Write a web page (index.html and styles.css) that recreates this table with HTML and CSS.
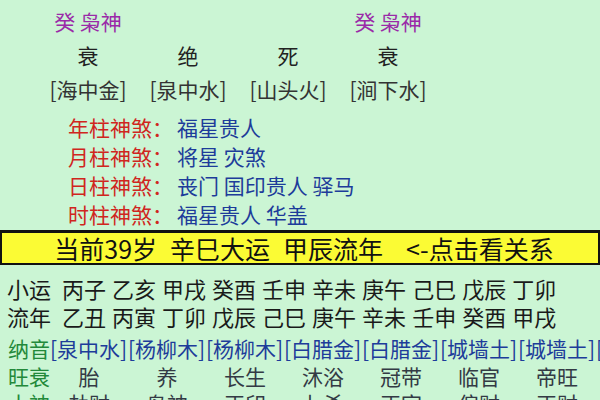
FILE: index.html
```html
<!DOCTYPE html>
<html lang="zh">
<head>
<meta charset="utf-8">
<link rel="stylesheet" href="styles.css">
</head>
<body>
<div class="page">
  <div class="pillars">
    <div class="cell god">癸 枭神</div><div class="cell"></div><div class="cell"></div><div class="cell god">癸 枭神</div>
    <div class="cell">衰</div><div class="cell">绝</div><div class="cell">死</div><div class="cell">衰</div>
    <div class="cell nayin">[海中金]</div><div class="cell nayin">[泉中水]</div><div class="cell nayin">[山头火]</div><div class="cell nayin">[涧下水]</div>
  </div>

  <div class="shensha">
    <div class="ss-row"><span class="ss-label">年柱神煞：</span><span class="ss-val">福星贵人</span></div>
    <div class="ss-row"><span class="ss-label">月柱神煞：</span><span class="ss-val">将星 灾煞</span></div>
    <div class="ss-row"><span class="ss-label">日柱神煞：</span><span class="ss-val">丧门 国印贵人 驿马</span></div>
    <div class="ss-row"><span class="ss-label">时柱神煞：</span><span class="ss-val">福星贵人 华盖</span></div>
  </div>

  <div class="bar">
    <span>当前39岁</span><span>辛巳大运</span><span>甲辰流年</span><span class="link">&lt;-点击看关系</span>
  </div>

  <div class="seq first">
    <span class="seq-label">小运</span>
    <span>丙子</span><span>乙亥</span><span>甲戌</span><span>癸酉</span><span>壬申</span><span>辛未</span><span>庚午</span><span>己巳</span><span>戊辰</span><span>丁卯</span>
  </div>
  <div class="seq">
    <span class="seq-label">流年</span>
    <span>乙丑</span><span>丙寅</span><span>丁卯</span><span>戊辰</span><span>己巳</span><span>庚午</span><span>辛未</span><span>壬申</span><span>癸酉</span><span>甲戌</span>
  </div>

  <div class="table nay">
    <span class="tlabel">纳音</span>
    <span class="tv">[泉中水]</span><span class="tv">[杨柳木]</span><span class="tv">[杨柳木]</span><span class="tv">[白腊金]</span><span class="tv">[白腊金]</span><span class="tv">[城墙土]</span><span class="tv">[城墙土]</span><span class="tv">[</span>
  </div>
  <div class="table ws">
    <span class="tlabel">旺衰</span>
    <span class="tc">胎</span><span class="tc">养</span><span class="tc">长生</span><span class="tc">沐浴</span><span class="tc">冠带</span><span class="tc">临官</span><span class="tc">帝旺</span>
  </div>
  <div class="table ts">
    <span class="tlabel">十神</span>
    <span class="tc">劫财</span><span class="tc">枭神</span><span class="tc">正印</span><span class="tc">七杀</span><span class="tc">正官</span><span class="tc">偏财</span><span class="tc">正财</span>
  </div>
</div>
</body>
</html>
```

FILE: styles.css
```css
html, body {
  margin: 0;
  padding: 0;
}
body {
  width: 600px;
  height: 400px;
  overflow: hidden;
  background: #cbf5d4;
  font-family: "Noto Sans CJK SC", "Noto Sans", sans-serif;
  color: #222;
}
.page {
  width: 600px;
}
.pillars {
  display: grid;
  grid-template-columns: repeat(4, 100px);
  grid-auto-rows: 34px;
  padding: 4px 0 0 38px;
  font-size: 21px;
  line-height: 34px;
  text-align: center;
}
.cell {
  white-space: nowrap;
}
.god {
  color: #9a2aa8;
}
.nayin {
  color: #333;
}
.shensha {
  margin-top: 7px;
  padding-left: 68px;
  font-size: 21px;
}
.ss-row {
  height: 29px;
  line-height: 29px;
  white-space: nowrap;
}
.ss-label {
  color: #d0261e;
}
.ss-val {
  color: #1d3c9a;
  margin-left: 4px;
}
.bar {
  margin-top: 1px;
  height: 30px;
  background: #fbfb34;
  border-top: 3px solid #111;
  border-bottom: 2px solid #111;
  border-left: 2px solid #111;
  border-right: 2px solid #111;
  display: flex;
  justify-content: center;
  gap: 13px;
  font-size: 25px;
  line-height: 30px;
  color: #111;
  padding-left: 8px;
}
.bar .link {
  margin-left: 10px;
}
.seq {
  display: flex;
  gap: 6px;
  padding-left: 7px;
  height: 28px;
  line-height: 28px;
  font-size: 22px;
  color: #1a1a1a;
  white-space: nowrap;
}
.seq.first {
  margin-top: 9px;
}
.seq-label {
  margin-right: 5px;
}
.table {
  display: grid;
  grid-template-columns: 42px repeat(7, 78px) 6px;
  padding-left: 8px;
  height: 28px;
  line-height: 28px;
  font-size: 21px;
  white-space: nowrap;
  overflow: hidden;
}
.table.nay {
  margin-top: 4px;
}
.table.ts {
  height: 26px;
  line-height: 26px;
}
.tlabel {
  color: #23893a;
}
.tv {
  color: #1d3c9a;
}
.tc {
  color: #333a44;
  text-align: center;
}
```
